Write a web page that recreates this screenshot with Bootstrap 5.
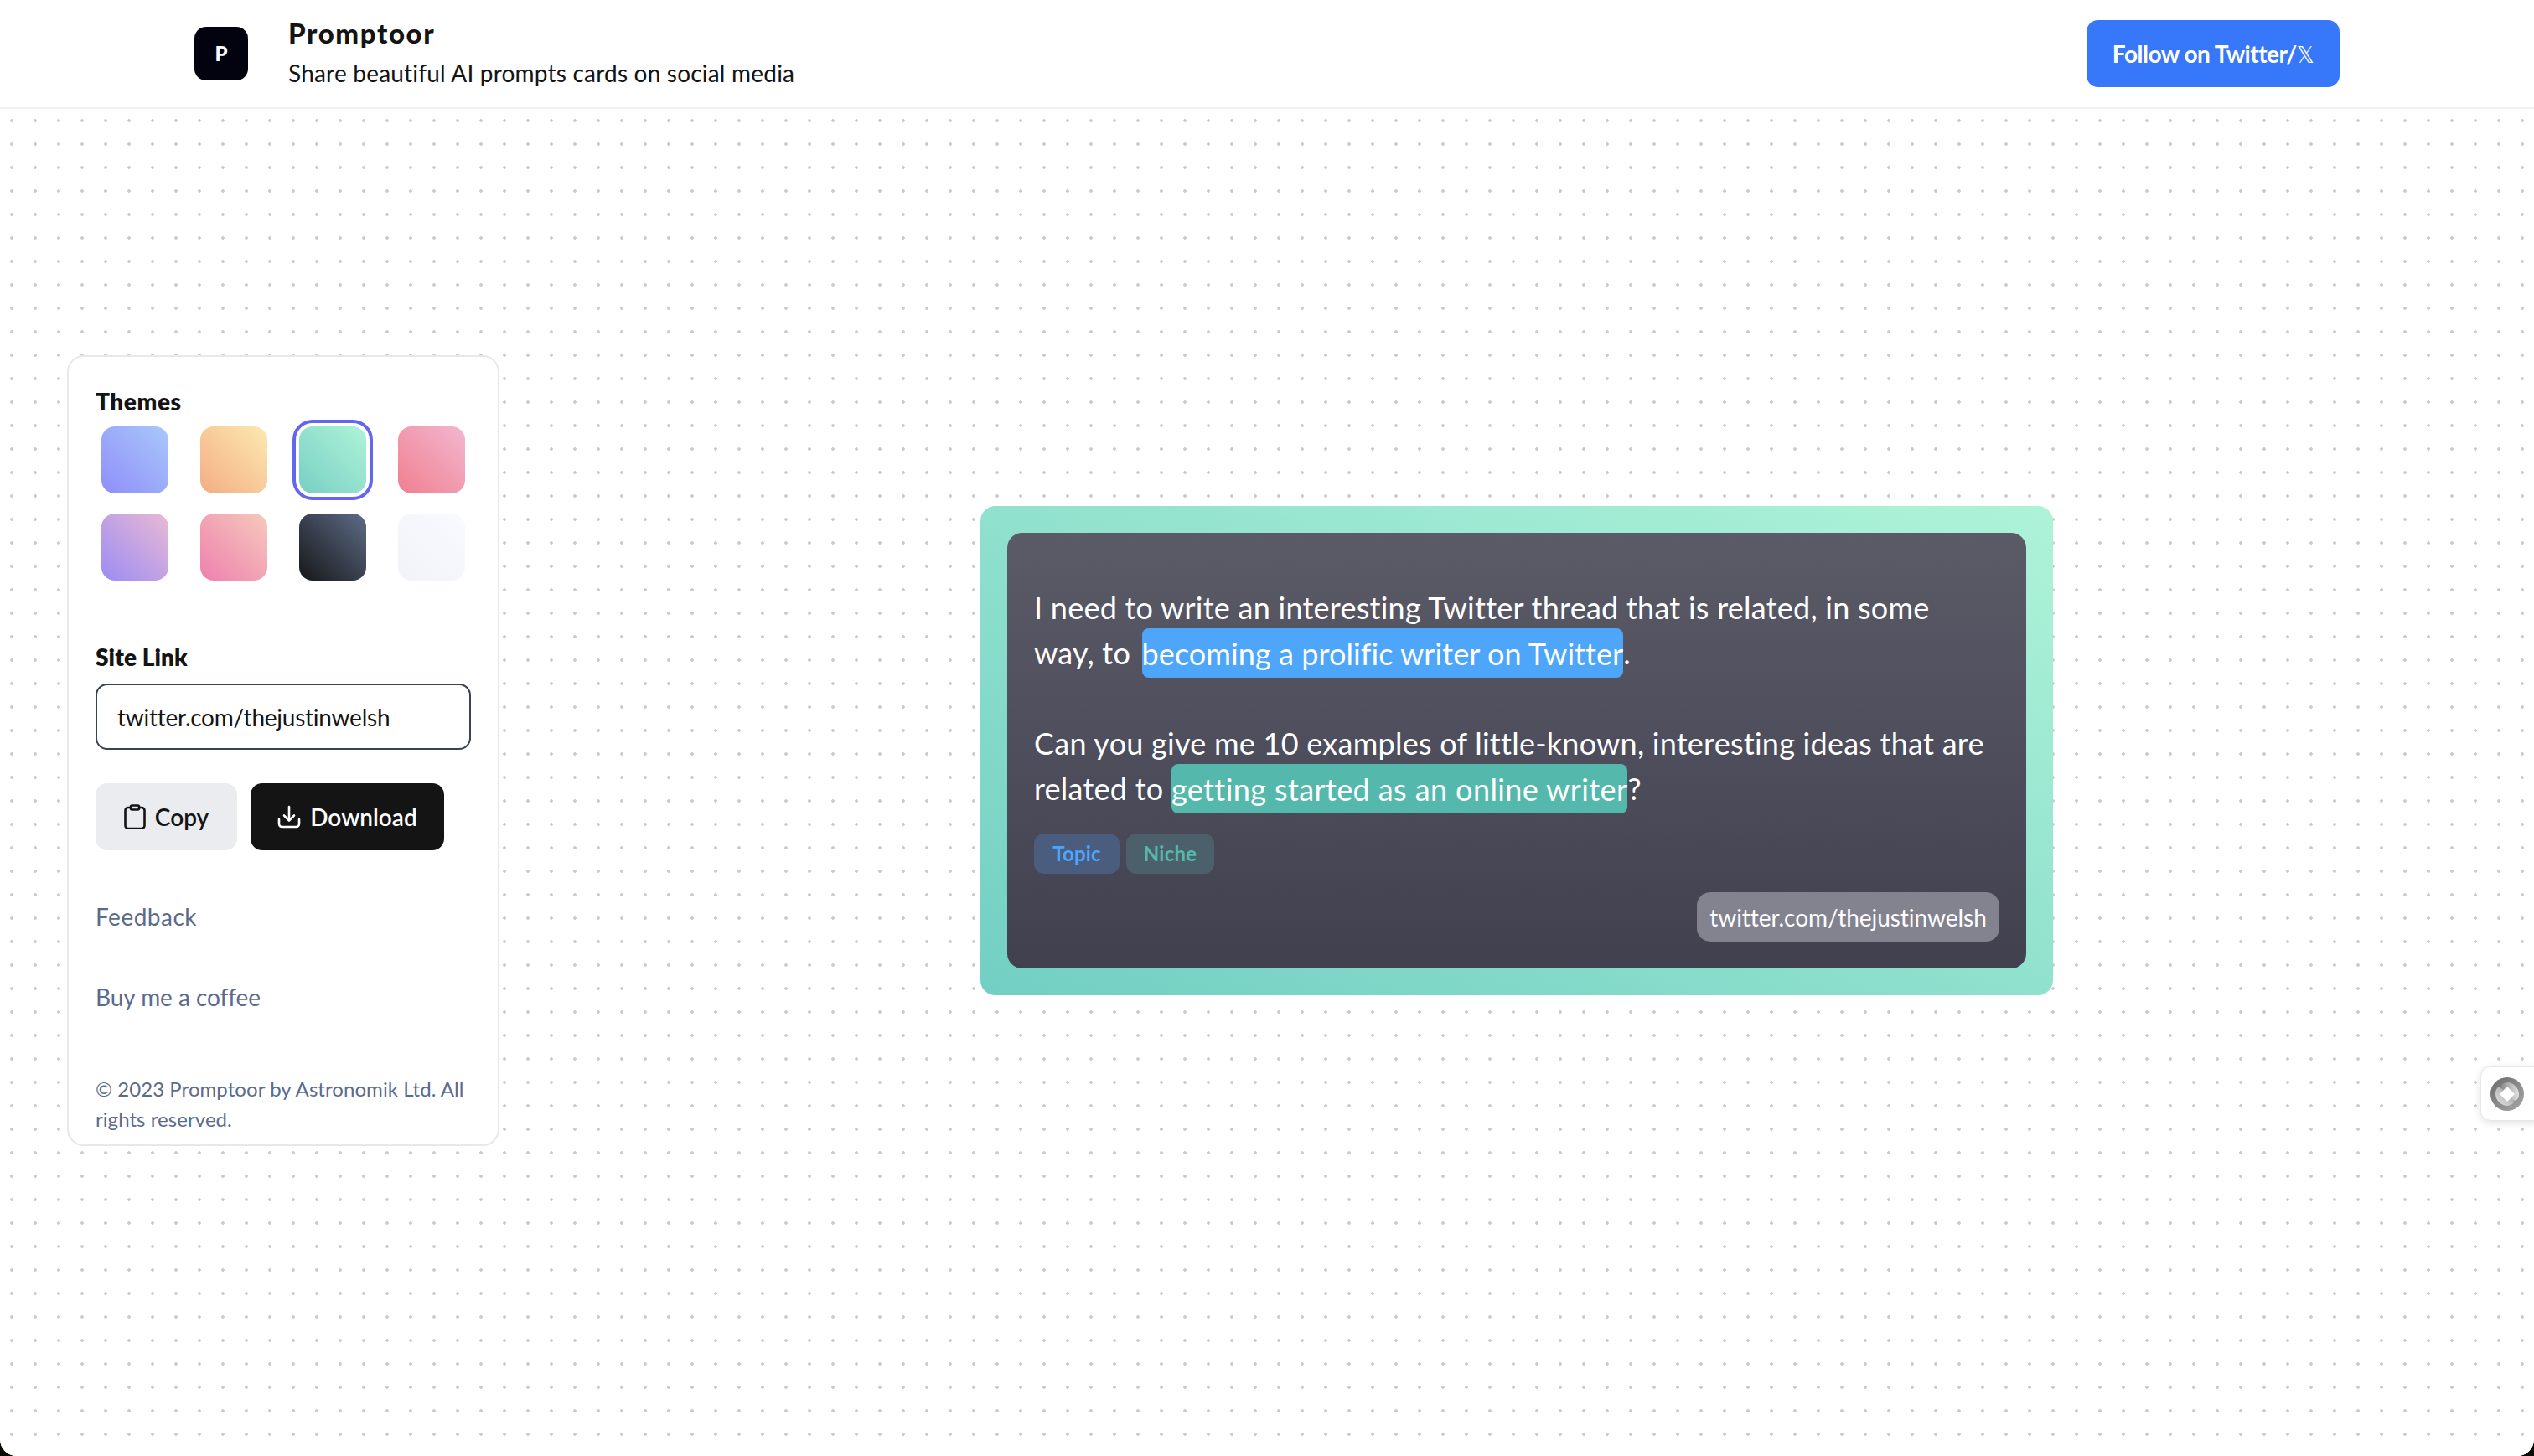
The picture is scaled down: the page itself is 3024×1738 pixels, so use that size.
<!DOCTYPE html>
<html lang="en">
<head>
<meta charset="utf-8">
<title>Promptoor</title>
<link href="https://cdn.jsdelivr.net/npm/bootstrap@5.3.0/dist/css/bootstrap.min.css" rel="stylesheet">
<style>
html,body{height:100%;margin:0}
body{background:#0c0c08;font-family:"Lato","Noto Sans",sans-serif;color:#141414}
.pt-shell{height:1738px;background:#fff;border-radius:0 0 20px 20px;overflow:hidden;position:relative}
.pt-top{height:130px;padding:0 232px;border-bottom:2px solid #f0f0f6;background:#fff}
.pt-logo{width:64px;height:64px;border-radius:14px;background:#03030f;color:#fff;font-weight:900;font-size:24px;line-height:1;margin-right:48px}
.pt-name{font-size:33px;font-weight:900;line-height:40px;letter-spacing:1.6px;color:#141414;margin-top:-2px}
.pt-sub{font-size:28px;line-height:40px;margin-top:8px;letter-spacing:.2px;color:#141414}
.pt-follow{width:302px;height:80px;border-radius:14px;background:#3777fa;color:#fff;border:0;font-size:28px;font-weight:700;padding:0;letter-spacing:-.5px}
.pt-follow:hover{background:#3777fa;color:#fff}
.pt-x{font-family:"DejaVu Sans",sans-serif;font-weight:400;font-size:26px}
.pt-main{height:1608px;padding:0 0 76px 80px;background-color:#fff;background-image:radial-gradient(circle at 14px 14px,#cbcbcb 0,#cbcbcb 1.5px,transparent 2.2px);background-size:28px 28px}
.pt-side{width:516px;height:944px;flex:none;border:2px solid #e7e7ee;border-radius:20px;background:#fff;padding:32px 31px 0 32px}
.pt-lbl{font-size:28px;line-height:42px;font-weight:800;letter-spacing:.55px;color:#141414}
.pt-swatches{display:grid;grid-template-columns:repeat(4,96px);column-gap:22px;row-gap:8px;margin:1px 0 0 -1px}
.pt-swatch{width:96px;height:96px;padding:8px;border-radius:24px;border:4px solid transparent;background-clip:padding-box}
.pt-swatch.is-on{border-color:#6366f1}
.pt-swatch i{display:block;width:80px;height:80px;margin:-4px;border-radius:16px}
.s1{background:linear-gradient(to top right,#8f8ef8,#a8c8fb)}
.s2{background:linear-gradient(to top right,#f3ad85,#fce9b0)}
.s3{background:linear-gradient(to top right,#78cfc3,#aef3d8)}
.s4{background:linear-gradient(to top right,#f07f8f,#f3b7d0)}
.s5{background:linear-gradient(to top right,#9b8cf4,#e9b9d3)}
.s6{background:linear-gradient(to top right,#ee80af,#f6c9bb)}
.s7{background:linear-gradient(to top right,#161719,#5d6c86)}
.s8{background:linear-gradient(to top right,#f1f3f9,#f9faff)}
.pt-site{margin-top:62px;letter-spacing:.1px}
.pt-input{height:79px;width:448px;margin-top:11px;border:2px solid #3a4254;border-radius:14px;font-size:28px;padding:0 24px;color:#141414;letter-spacing:-.25px;background:#fff;box-shadow:none}
.pt-actions{margin-top:40px;gap:16px}
.pt-btn{height:80px;border-radius:14px;border:0;font-size:28px;font-weight:600;padding:0;letter-spacing:0;gap:11px}
.pt-copy{width:169px;background:#ebecf0;color:#141414}
.pt-copy:hover{background:#ebecf0;color:#141414}
.pt-dl{width:231px;background:#141414;color:#fff}
.pt-dl:hover{background:#141414;color:#fff}
.pt-link{display:block;font-size:28px;line-height:42px;color:#5a6b8e;text-decoration:none}
.pt-fb{margin-top:58px;letter-spacing:.5px}
.pt-buy{margin-top:54px;letter-spacing:-.05px}
.pt-legal{margin:71px 0 0;font-size:24px;line-height:36px;color:#5a6b8e;letter-spacing:.06px}
.pt-stage{min-width:0}
.pt-frame{width:1280px;height:584px;padding:32px;border-radius:18px;background:linear-gradient(to top right,#72cfc3,#aef3d8)}
.pt-inner{height:520px;border-radius:18px;background:linear-gradient(to bottom,#5b5b68,#40404f);padding:62px 32px 32px;color:#fff}
.pt-prompt{font-size:36px;line-height:54px;margin:0;letter-spacing:.25px}
.pt-hl{padding:7.5px 0;border-radius:8px}
.pt-hl-a{background:#4da6fa;letter-spacing:.08px;margin-left:4px}
.pt-hl-b{background:#55b8ac;letter-spacing:.4px}
.pt-tags{gap:8px;margin-top:27px}
.pt-tag{height:48px;border-radius:12px;font-size:24px;font-weight:700;line-height:48px;text-align:center;letter-spacing:.2px}
.pt-tag-a{width:102px;background:#4a5d7e;color:#4da6fa}
.pt-tag-b{width:105px;background:#4c606b;color:#55b8ac}
.pt-chip{width:361px;height:59px;border-radius:16px;background:#82838f;color:#fff;font-size:28px;line-height:60px;text-align:center;letter-spacing:-.05px}
.pt-widget{position:absolute;right:-12px;top:1273px;width:76px;height:65px;background:#fff;border:1px solid #e8e8e8;border-radius:12px;box-shadow:0 2px 10px rgba(0,0,0,.12);padding-left:11px}
</style>
</head>
<body>
<div class="pt-shell d-flex flex-column">
  <header class="pt-top d-flex align-items-center justify-content-between">
    <div class="d-flex align-items-center">
      <div class="pt-logo d-flex align-items-center justify-content-center">P</div>
      <div>
        <div class="pt-name">Promptoor</div>
        <div class="pt-sub">Share beautiful AI prompts cards on social media</div>
      </div>
    </div>
    <button class="btn pt-follow" type="button">Follow on Twitter/<span class="pt-x">𝕏</span></button>
  </header>
  <main class="pt-main d-flex align-items-center">
    <aside class="pt-side d-flex flex-column">
      <div class="pt-lbl">Themes</div>
      <div class="pt-swatches">
        <div class="pt-swatch"><i class="s1"></i></div>
        <div class="pt-swatch"><i class="s2"></i></div>
        <div class="pt-swatch is-on"><i class="s3"></i></div>
        <div class="pt-swatch"><i class="s4"></i></div>
        <div class="pt-swatch"><i class="s5"></i></div>
        <div class="pt-swatch"><i class="s6"></i></div>
        <div class="pt-swatch"><i class="s7"></i></div>
        <div class="pt-swatch"><i class="s8"></i></div>
      </div>
      <div class="pt-lbl pt-site">Site Link</div>
      <input class="form-control pt-input" type="text" value="twitter.com/thejustinwelsh" aria-label="Site Link">
      <div class="d-flex pt-actions">
        <button class="btn pt-btn pt-copy d-flex align-items-center justify-content-center" type="button">
          <svg width="26" height="30" viewBox="0 0 26 30" fill="none" stroke="#141414" stroke-width="2.6" stroke-linejoin="round"><path d="M8 4H5a3.500 3.500 0 0 0-3.500 3.500v18A3.500 3.500 0 0 0 5 29h16a3.500 3.500 0 0 0 3.500-3.500v-18A3.500 3.500 0 0 0 21 4h-3"/><rect x="8" y="1.500" width="10" height="5" rx="1.500"/></svg>
          Copy
        </button>
        <button class="btn pt-btn pt-dl d-flex align-items-center justify-content-center" type="button">
          <svg width="28" height="28" viewBox="0 0 28 28" fill="none" stroke="#fff" stroke-width="2.6" stroke-linecap="round" stroke-linejoin="round"><path d="M14 2v16M8 12.500l6 6 6-6"/><path d="M2 17v5.500A3.500 3.500 0 0 0 5.500 26h17a3.500 3.500 0 0 0 3.500-3.500V17"/></svg>
          Download
        </button>
      </div>
      <a class="pt-link pt-fb" href="#">Feedback</a>
      <a class="pt-link pt-buy" href="#">Buy me a coffee</a>
      <p class="pt-legal">© 2023 Promptoor by Astronomik Ltd. All rights reserved.</p>
    </aside>
    <section class="pt-stage flex-grow-1 d-flex justify-content-center">
      <div class="pt-frame">
        <div class="pt-inner d-flex flex-column">
          <p class="pt-prompt">I need to write an interesting Twitter thread that is related, in some<br>way, to <span class="pt-hl pt-hl-a">becoming a prolific writer on Twitter</span>.</p>
          <p class="pt-prompt mt-0"><br>Can you give me 10 examples of little-known, interesting ideas that are related to <span class="pt-hl pt-hl-b">getting started as an online writer</span>?</p>
          <div class="d-flex pt-tags">
            <div class="pt-tag pt-tag-a">Topic</div>
            <div class="pt-tag pt-tag-b">Niche</div>
          </div>
          <div class="mt-auto d-flex justify-content-end"><div class="pt-chip">twitter.com/thejustinwelsh</div></div>
        </div>
      </div>
    </section>
  </main>
  <div class="pt-widget d-flex align-items-center">
    <svg width="40" height="40" viewBox="0 0 40 40">
      <defs>
        <linearGradient id="wa" x1="0" y1="0" x2="1" y2="1"><stop offset="0" stop-color="#6a6a6a"/><stop offset="1" stop-color="#a8a8a8"/></linearGradient>
        <linearGradient id="wb" x1="0" y1="1" x2="1" y2="0"><stop offset="0" stop-color="#e6e6e6"/><stop offset="1" stop-color="#9a9a9a"/></linearGradient>
        <linearGradient id="wc" x1="0" y1="0" x2="1" y2="0"><stop offset="0" stop-color="#8c8c8c"/><stop offset="1" stop-color="#e2e2e2"/></linearGradient>
      </defs>
      <circle cx="20" cy="20" r="20" fill="url(#wa)"/>
      <path d="M20 6C27 6 34 13 34 20 34 27 29 29 27 27L20 20 13 13C12 9 16 6 20 6Z" fill="url(#wc)"/>
      <path d="M6 20C6 13 10 10 13 13L27 27C30 31 24 34 20 34 13 34 6 27 6 20Z" fill="url(#wb)"/>
      <path d="M20 11 29 20 20 29 11 20Z" fill="#fff"/>
    </svg>
  </div>
</div>
<script src="https://cdn.jsdelivr.net/npm/bootstrap@5.3.0/dist/js/bootstrap.bundle.min.js"></script>
</body>
</html>
